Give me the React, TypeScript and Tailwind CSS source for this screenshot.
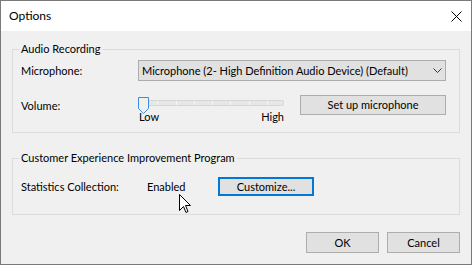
import React from "react";

export default function App() {
  const ticks = [0, 1, 2, 3, 4, 5, 6, 7, 8];
  return (
    <div
      className="relative w-[472px] h-[265px] border border-[#7a7a7a] flex flex-col text-[11px] text-black overflow-hidden"
      style={{ fontFamily: 'Lato, "Noto Sans", sans-serif' }}
    >
      <div className="h-[30px] bg-white flex items-center justify-between pl-[8px] pr-[9px] shrink-0">
        <span className="leading-[16px] text-[12px]">Options</span>
        <svg width="11" height="11" viewBox="0 0 11 11">
          <path d="M0.5 0.5 L10.5 10.5 M10.5 0.5 L0.5 10.5" stroke="#000" strokeWidth="1" />
        </svg>
      </div>
      <div className="flex-1 bg-[#f0f0f0] px-[11px] pt-[10px] flex flex-col">
        <fieldset className="h-[92px] border border-[#dcdcdc] m-0 pl-[8px] pr-[12px] shrink-0">
          <legend className="px-[2px] -ml-[2px] leading-[16px]">Audio Recording</legend>
          <div className="flex items-center mt-[3px]">
            <span className="w-[117px] leading-[16px]">Microphone:</span>
            <div className="w-[308px] h-[21px] bg-[#e1e1e1] border border-[#adadad] flex items-center justify-between pl-[3px] pr-[3px]">
              <span className="leading-[16px] whitespace-nowrap">Microphone (2- High Definition Audio Device) (Default)</span>
              <svg width="9" height="5" viewBox="0 0 9 5">
                <path d="M0.5 0.5 L4.5 4.5 L8.5 0.5" stroke="#333" strokeWidth="1" fill="none" />
              </svg>
            </div>
          </div>
          <div className="flex items-start mt-[14px]">
            <span className="w-[117px] leading-[16px] mt-[3px]">Volume:</span>
            <div className="w-[146px] flex flex-col">
              <div className="relative h-[16px] mt-[2px]">
                <div className="absolute left-0 right-0 top-[3px] h-[6px] rounded-[2px] border border-[#d6d6d6] bg-[#e7e7e7]" />
                {ticks.map((i) => (
                  <div
                    key={i}
                    className="absolute top-[4px] h-[4px] w-px bg-[#f7f7f7]"
                    style={{ left: Math.round(i * 18.25) + 1 }}
                  />
                ))}
                <svg className="absolute left-0 top-0" width="12" height="17" viewBox="0 0 12 17">
                  <path
                    d="M0.5 0.5 H10.5 V11.5 L5.5 16.5 L0.5 11.5 Z"
                    fill="#f0f0f0"
                    stroke="#3c8ddb"
                    strokeWidth="1"
                  />
                </svg>
              </div>
              <div className="flex justify-between leading-[13px] -mt-[3px] pl-[1px]">
                <span>Low</span>
                <span>High</span>
              </div>
            </div>
            <button className="ml-[16px] w-[146px] h-[20px] bg-[#e1e1e1] border border-[#adadad] leading-[16px]">
              Set up microphone
            </button>
          </div>
        </fieldset>

        <fieldset className="h-[65px] border border-[#dcdcdc] m-0 mt-[17px] pl-[8px] pr-[12px] shrink-0">
          <legend className="px-[2px] -ml-[2px] leading-[16px]">Customer Experience Improvement Program</legend>
          <div className="flex items-center mt-[11px]">
            <span className="w-[126px] leading-[16px]">Statistics Collection:</span>
            <span className="w-[71px] leading-[16px]">Enabled</span>
            <button className="w-[96px] h-[19px] bg-[#e1e1e1] border-2 border-[#0078d7] leading-[14px]">
              Customize...
            </button>
          </div>
        </fieldset>

        <div className="flex justify-end gap-[8px] mt-[17px]">
          <button className="w-[73px] h-[21px] bg-[#e1e1e1] border border-[#adadad] leading-[16px]">OK</button>
          <button className="w-[73px] h-[21px] bg-[#e1e1e1] border border-[#adadad] leading-[16px]">Cancel</button>
        </div>
      </div>

      <svg className="absolute left-[178px] top-[193px]" width="12" height="19" viewBox="0 0 12 19">
        <path
          d="M0.5 0.5 L0.5 16.5 L4.5 12.5 L7 18.5 L9 17.5 L6.5 11.5 L11.5 11.5 Z"
          fill="#fff"
          stroke="#000"
          strokeWidth="1"
          strokeLinejoin="miter"
        />
      </svg>
    </div>
  );
}
